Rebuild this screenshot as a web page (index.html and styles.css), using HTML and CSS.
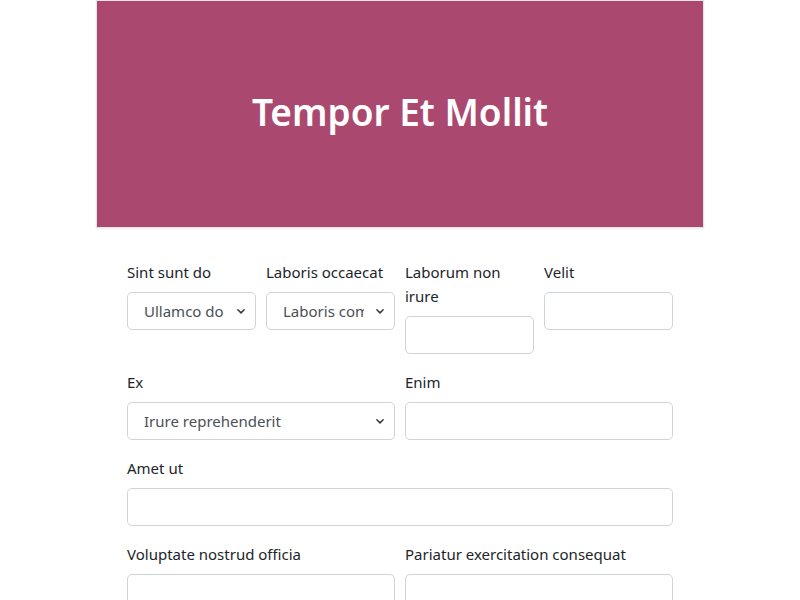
FILE: index.html
```html
<!DOCTYPE html>
<html lang="en">
<head>
    <meta charset="UTF-8">
    <meta name="viewport" content="width=device-width, initial-scale=1.0">
    <title>Tempor Et Mollit</title>
    <link rel="stylesheet" href="styles.css">
</head>
<body>
    <div class="page">
        <header class="hero">
            <h1>Tempor Et Mollit</h1>
        </header>
        <form class="form">
            <div class="row cols-4">
                <div class="field">
                    <label>Sint sunt do</label>
                    <select><option>Ullamco do</option></select>
                </div>
                <div class="field">
                    <label>Laboris occaecat</label>
                    <select><option>Laboris commodo</option></select>
                </div>
                <div class="field">
                    <label>Laborum non irure</label>
                    <input type="text">
                </div>
                <div class="field">
                    <label>Velit</label>
                    <input type="text">
                </div>
            </div>
            <div class="row cols-2">
                <div class="field">
                    <label>Ex</label>
                    <select><option>Irure reprehenderit</option></select>
                </div>
                <div class="field">
                    <label>Enim</label>
                    <input type="text">
                </div>
            </div>
            <div class="row">
                <div class="field">
                    <label>Amet ut</label>
                    <input type="text">
                </div>
            </div>
            <div class="row cols-2">
                <div class="field">
                    <label>Voluptate nostrud officia</label>
                    <input type="text">
                </div>
                <div class="field">
                    <label>Pariatur exercitation consequat</label>
                    <input type="text">
                </div>
            </div>
        </form>
    </div>
</body>
</html>
```

FILE: styles.css
```css
* { margin: 0; padding: 0; box-sizing: border-box; }
body {
    background-color: #fff;
    color: #212529;
    font-family: "Noto Sans", "Open Sans", sans-serif;
    font-size: 15px;
    line-height: 24px;
}

.page {
    width: 608px;
    margin: 0 auto;
}
.hero {
    display: flex;
    align-items: center;
    justify-content: center;
    height: 228px;
    background-color: #ab4870;
    border: 1px solid #e3e3e3;
    box-shadow: 0 1px 2px rgba(0, 0, 0, .08);
    color: #fff;
}
.hero h1 {
    font-size: 37px;
    font-weight: 600;
    line-height: 1.2;
    margin-top: -4px;
}

.form {
    padding: 32px 31px;
}
.row {
    display: grid;
    grid-template-columns: 1fr;
    column-gap: 10px;
    margin-bottom: 16px;
    align-items: start;
}
.row.cols-4 { grid-template-columns: repeat(4, 1fr); }
.row.cols-2 { grid-template-columns: repeat(2, 1fr); }

.field label {
    display: block;
    margin-bottom: 8px;
}
.field input,
.field select {
    display: block;
    width: 100%;
    height: 38px;
    border: 1px solid #ced4da;
    border-radius: 5px;
    background-color: #fff;
    font: inherit;
    color: #495057;
    padding: 0 16px;
}
.field select {
    appearance: none;
    -webkit-appearance: none;
    padding-right: 30px;
    background-image: url("data:image/svg+xml,%3csvg xmlns='http://www.w3.org/2000/svg' viewBox='0 0 16 16'%3e%3cpath fill='none' stroke='%23343a40' stroke-linecap='round' stroke-linejoin='round' stroke-width='2.4' d='M3 6l5 5 5-5'/%3e%3c/svg%3e");
    background-repeat: no-repeat;
    background-position: right 9px center;
    background-size: 10px 10px;
    text-overflow: clip;
}
```
